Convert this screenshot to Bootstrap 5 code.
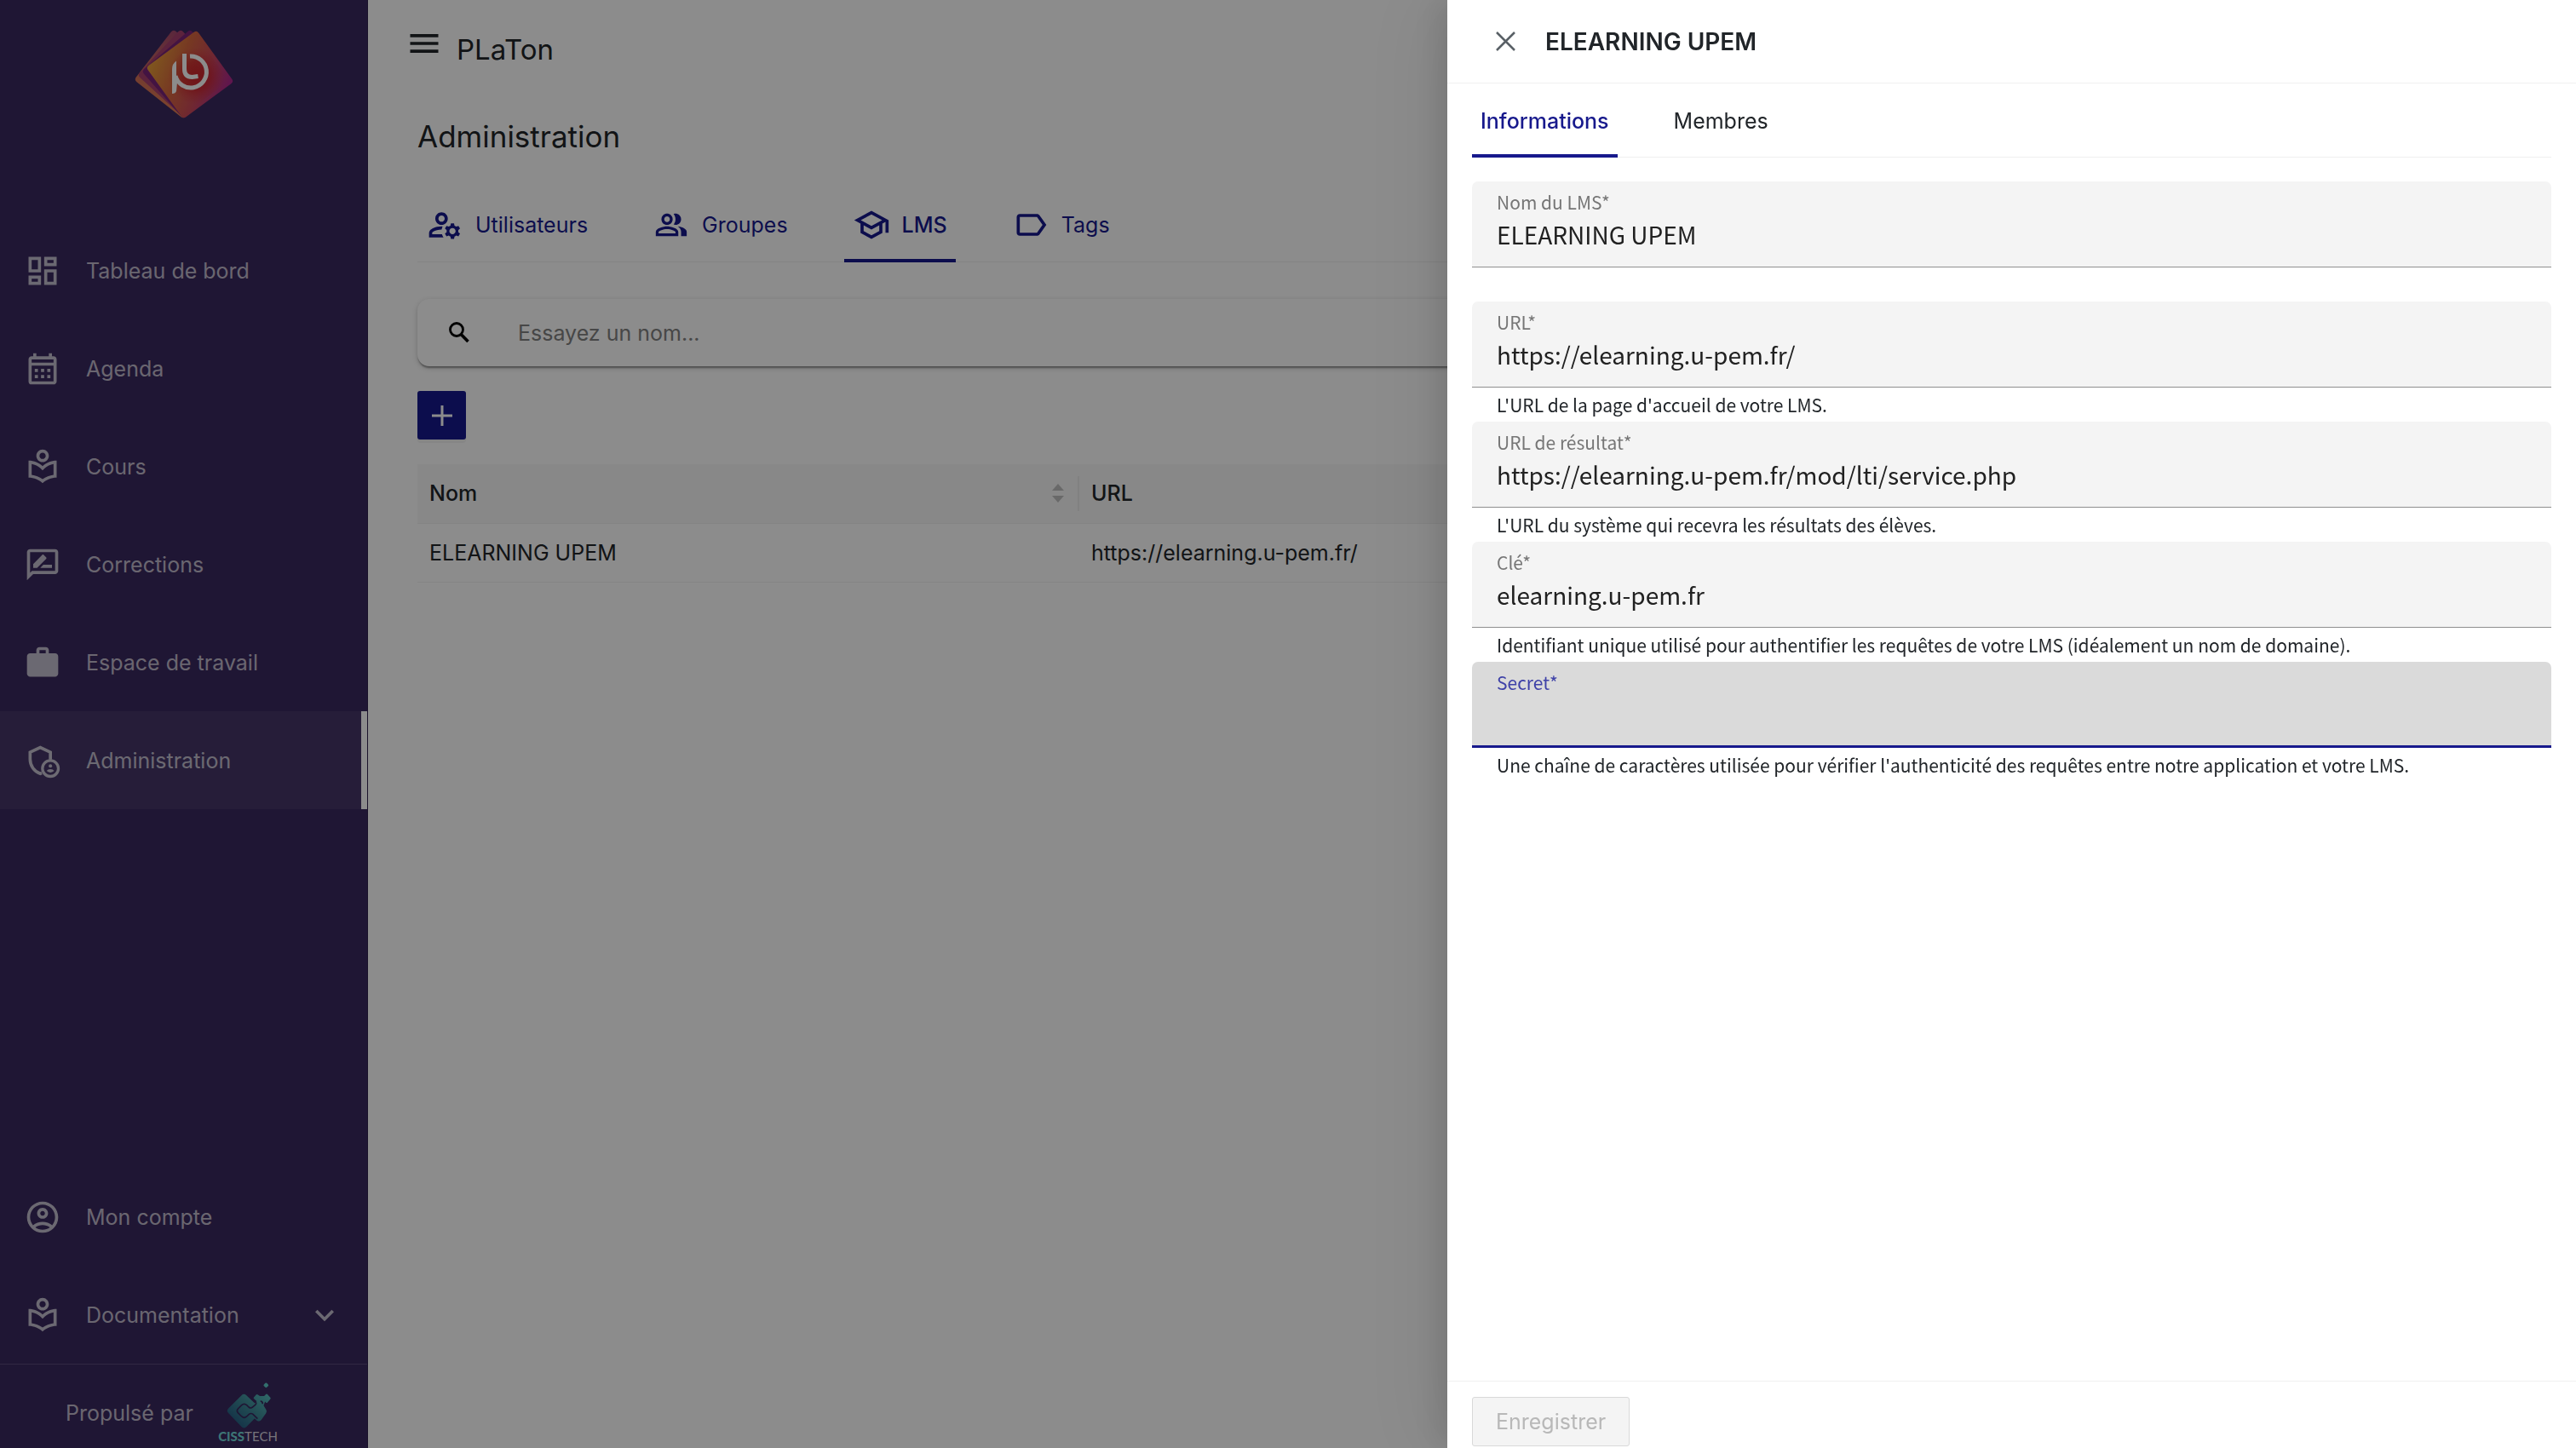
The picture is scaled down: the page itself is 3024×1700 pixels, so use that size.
<!DOCTYPE html>
<html lang="fr">
<head>
<meta charset="utf-8">
<meta name="viewport" content="width=device-width, initial-scale=1">
<title>PLaTon - Administration</title>
<link href="https://cdn.jsdelivr.net/npm/bootstrap@5.3.0/dist/css/bootstrap.min.css" rel="stylesheet">
<style>
:root { --brand: #17198c; --side: #3a285f; --line: #f0f0f0; }
body { font-family: Inter, "Liberation Sans", sans-serif; font-size: 25px; line-height: 40px; color: #212529; background: #fff; }
a { text-decoration: none; }
.ico { width: 44px; height: 44px; flex: none; fill: currentColor; }
.shell { min-height: 100vh; }

/* Sidebar */
.side { width: 432px; flex: none; background: var(--side); border-right: 1px solid #2e1f4d; }
.side-brand { height: 260px; padding-top: 35px; }
.side-brand svg { width: 116px; height: 104px; }
.side-link { display: flex; align-items: center; gap: 29px; height: 115px; padding: 0 21px 0 28px; border-right: 7px solid transparent; }
.side-link, .side-credit { color: rgba(255,255,255,.7); }
.side-link:hover { color: #fff; }
.side-link.on { background: #453668; border-right-color: #fff; }
.side-link .chev { width: 44px; height: 44px; }
.side-credit { height: 99px; border-top: 1px solid #5a4a7b; padding: 16px 0 0 77px; gap: 26px; }
.side-credit svg { width: 76px; height: 80px; }
.logo-txt { font: 15px Lato, sans-serif; fill: #d8d4df; }
.logo-txt .b { font-weight: 900; fill: #6fd6d6; }

/* Page */
.page { padding: 0 58px; }
.topbar { height: 102px; margin-left: -14px; gap: 16px; }
.topbar .site { font-size: 33px; line-height: 40px; padding-top: 14px; }
.page h1 { font-size: 35px; line-height: 48px; margin: 34px 0 0; font-weight: 400; }
.line-tabs { gap: 56px; border-bottom: 1px solid var(--line); list-style: none; margin: 0; padding: 0; }
.line-tabs a { display: flex; align-items: center; gap: 14px; padding: 4px 10px 0; height: 89px; border-bottom: 4px solid transparent; margin-bottom: -1px; color: var(--brand); }
.line-tabs a.on { border-bottom-color: var(--brand); font-weight: 500; }
.main-tabs { margin-top: 35px; }
.search { height: 79px; border-radius: 14px; margin: 43px 0 29px; padding: 0 36px; gap: 56px; box-shadow: 0 3px 2px -1px rgba(0,0,0,.35), 0 2px 6px rgba(0,0,0,.2); background: #fff; }
.search svg { width: 26px; height: 26px; flex: none; }
.search input { border: 0; padding: 0; flex: 1; background: none; outline: 0; }
.search input::placeholder { color: #818181; }
.add-btn { width: 57px; height: 57px; padding: 0; border: 0; border-radius: 3px; background: var(--brand); display: flex; align-items: center; justify-content: center; box-shadow: 0 4px 0 rgba(0,0,0,.04); }
.add-btn svg { width: 24px; height: 24px; }
.lms { margin: 29px 0 0; table-layout: fixed; }
.lms > :not(caption) > * > * { padding: 14px; height: 69px; border-bottom: 1px solid var(--line); vertical-align: middle; }
.lms thead th { background: #f8f8f8; font-weight: 500; }
.col-name { width: 777px; }
.th-in { display: flex; align-items: center; }
.th-in svg { width: 18px; height: 24px; }
.lms thead th.has-split { padding-right: 0; }
.split { width: 2px; height: 41px; background: #ebebeb; margin-left: 14px; }

/* Drawer */
.offcanvas-backdrop.show { opacity: .45; }
.drawer { --bs-offcanvas-width: 1325px; --bs-offcanvas-border-width: 0; color: #212529; outline: 0; box-shadow: -12px 0 32px rgba(0,0,0,.1), -18px 0 90px 8px rgba(0,0,0,.07); }
.drawer-head { height: 98px; padding: 0 57px; gap: 35px; border-bottom: 1px solid var(--line); }
.drawer-head button { width: 23px; height: 23px; padding: 0; border: 0; background: none; display: flex; color: #596066; }
.drawer-head h2 { font-size: 28px; line-height: 40px; margin: 0; font-weight: 600; }
.drawer-body { padding: 0 29px; flex: 1; }
.drawer-tabs a { height: 87px; color: #212529; }
.drawer-tabs a.on { color: var(--brand); }
.fields { padding-top: 28px; font-family: "Noto Sans CJK JP", "Noto Sans", sans-serif; }
.mfield { height: 141px; }
.mbox { height: 101px; background: #f4f4f4; border-bottom: 1px solid #8f8f8f; border-radius: 7px 7px 0 0; padding: 8px 29px 0; }
.mbox label { display: block; font-size: 21px; line-height: 32px; color: #767676; }
.mbox input { display: block; width: 100%; border: 0; padding: 0; background: none; outline: 0; font-size: 28px; line-height: 44px; height: 44px; color: #212121; }
.mbox.on { background: #dadada; border-bottom: 3px solid var(--brand); }
.mbox.on label { color: #3f42a8; }
.mhint { font-size: 21px; line-height: 32px; padding: 4px 29px 0; margin: 0; color: #212529; }
.drawer-foot { border-top: 1px solid var(--line); padding: 18px 29px 2px; }
.save { height: 58px; padding: 0 27px; border: 1px solid #d9d9d9; border-radius: 3px; background: #f4f4f4; color: #b8b8b8; }
</style>
</head>
<body>
<div class="shell d-flex">
  <nav class="side d-flex flex-column" aria-label="Navigation">
    <div class="side-brand text-center">
      <svg viewBox="0 0 116 104" aria-hidden="true">
        <defs>
          <linearGradient id="g1" x1="0" y1=".3" x2="1" y2=".7"><stop offset="0" stop-color="#e8a038"/><stop offset=".35" stop-color="#d8683f"/><stop offset=".65" stop-color="#cc4a58"/><stop offset="1" stop-color="#ac2690"/></linearGradient>
          <radialGradient id="g2" cx=".58" cy=".52" r=".36"><stop offset="0" stop-color="#cc1c24" stop-opacity=".85"/><stop offset=".5" stop-color="#cc1c24" stop-opacity=".6"/><stop offset="1" stop-color="#cc3040" stop-opacity="0"/></radialGradient>
          <linearGradient id="g3" x1=".2" y1="1" x2=".7" y2="0"><stop offset="0" stop-color="#e8824e"/><stop offset="1" stop-color="#a04470"/></linearGradient>
        </defs>
        <g stroke-linejoin="round" stroke-width="8">
          <path d="M5 58 46 5l52 46-41 48z" fill="url(#g3)" stroke="url(#g3)"/>
          <path d="M9 53 54 5l45 50-41 43z" fill="#a8406f" stroke="#a8406f"/>
          <path d="M14 49 65 5l40 52-47 42z" fill="#7a2479" stroke="#7a2479"/>
          <path d="M19 45 72 6l39 54-53 39z" fill="url(#g1)" stroke="url(#g1)"/>
          <path d="M19 45 72 6l39 54-53 39z" fill="url(#g2)"/>
        </g>
        <g fill="none" stroke="#fff" stroke-width="5">
          <path d="M65 31A18.500 18.500 0 1 1 48 54M58.500 28v18q0 9.500 9 9.500l7-1"/>
        </g>
        <path d="M44 75V46q0-6 5-9.500V58l1 4-1 10q-1 3-5 3z" fill="#fff"/>
      </svg>
    </div>
    <a class="side-link" href="#"><svg class="ico" viewBox="0 0 24 24"><path d="M19 5v2h-4V5h4M9 5v6H5V5h4m10 8v6h-4v-6h4M9 17v2H5v-2h4M21 3h-8v6h8V3zM11 3H3v10h8V3zm10 8h-8v10h8V11zm-10 4H3v6h8v-6z"/></svg>Tableau de bord</a>
    <a class="side-link" href="#"><svg class="ico" viewBox="0 0 24 24"><path d="M19 4h-1V2h-2v2H8V2H6v2H5c-1.110 0-2 .9-2 2v14a2 2 0 0 0 2 2h14c1.100 0 2-.9 2-2V6c0-1.100-.9-2-2-2zm0 16H5V10h14v10zm0-12H5V6h14v2zM9 14H7v-2h2v2zm4 0h-2v-2h2v2zm4 0h-2v-2h2v2zm-8 4H7v-2h2v2zm4 0h-2v-2h2v2zm4 0h-2v-2h2v2z"/></svg>Agenda</a>
    <a class="side-link" href="#"><svg class="ico" viewBox="0 0 24 24"><path id="reader" d="M12 9c2.200 0 4-1.800 4-4s-1.800-4-4-4-4 1.800-4 4 1.800 4 4 4zm0-6c1.100 0 2 .9 2 2s-.9 2-2 2-2-.9-2-2 .9-2 2-2zm0 8.550C9.640 9.350 6.480 8 3 8v11c3.480 0 6.640 1.350 9 3.550 2.360-2.190 5.520-3.550 9-3.550V8c-3.480 0-6.640 1.350-9 3.550zm7 5.580c-2.530.34-4.930 1.300-7 2.820-2.060-1.520-4.470-2.490-7-2.830v-6.950c2.100.38 4.050 1.350 5.640 2.830L12 14.280l1.360-1.270c1.590-1.480 3.540-2.450 5.640-2.830v6.950z"/></svg>Cours</a>
    <a class="side-link" href="#"><svg class="ico" viewBox="0 0 24 24"><path d="M20 2H4c-1.100 0-2 .9-2 2v18l4-4h14c1.100 0 2-.9 2-2V4c0-1.100-.9-2-2-2zm0 14H5.170L4 17.170V4h16v12zM10.500 14H18v-2h-5.500zM14.360 8.130c.2-.2.2-.51 0-.71l-1.770-1.770c-.2-.2-.51-.2-.71 0L6 11.530V14h2.470l5.890-5.870z"/></svg>Corrections</a>
    <a class="side-link" href="#"><svg class="ico" viewBox="0 0 24 24"><path d="M20 6h-4V4c0-1.110-.89-2-2-2h-4c-1.110 0-2 .89-2 2v2H4c-1.110 0-2 .89-2 2v11c0 1.110.89 2 2 2h16c1.110 0 2-.89 2-2V8c0-1.110-.89-2-2-2zm-6 0h-4V4h4v2z"/></svg>Espace de travail</a>
    <a class="side-link on" href="#" aria-current="page"><svg class="ico" viewBox="0 0 24 24"><path d="M17 11.200V6.650L10.500 3.600 4 6.650V11c0 4.200 2.600 8 6.500 9.300l1-.4" fill="none" stroke="currentColor" stroke-width="2"/><circle cx="17" cy="17" r="5.100" fill="none" stroke="currentColor" stroke-width="1.800"/><circle cx="17" cy="15.400" r="1.100"/><path d="M14.600 18.600q.6-1.100 2.400-1.100t2.400 1.100q-.9 1-2.400 1t-2.400-1z"/></svg>Administration</a>
    <div class="mt-auto">
      <a class="side-link" href="#"><svg class="ico" viewBox="0 0 24 24"><path d="M12 2C6.480 2 2 6.480 2 12s4.480 10 10 10 10-4.480 10-10S17.520 2 12 2zM7.350 18.500C8.660 17.560 10.260 17 12 17s3.340.56 4.650 1.500C15.340 19.440 13.740 20 12 20s-3.340-.56-4.650-1.500zm10.790-1.380C16.450 15.800 14.320 15 12 15s-4.450.8-6.140 2.120C4.700 15.730 4 13.950 4 12c0-4.420 3.580-8 8-8s8 3.580 8 8c0 1.950-.7 3.730-1.860 5.120zM12 6c-1.930 0-3.500 1.570-3.500 3.500S10.070 13 12 13s3.500-1.570 3.500-3.500S13.930 6 12 6zm0 5c-.83 0-1.500-.67-1.500-1.500S11.170 8 12 8s1.500.67 1.500 1.500S12.830 11 12 11z"/></svg>Mon compte</a>
      <a class="side-link" href="#"><svg class="ico" viewBox="0 0 24 24"><use href="#reader"/></svg><span class="flex-grow-1">Documentation</span><svg class="chev" viewBox="0 0 24 24" fill="currentColor"><path d="M7.410 8.590 12 13.170l4.590-4.580L18 10l-6 6-6-6 1.410-1.410z"/></svg></a>
      <div class="side-credit d-flex align-items-center">
        <span>Propulsé par</span>
        <svg viewBox="-4 0 76 80" role="img" aria-label="CISSTECH">
          <defs><linearGradient id="c1" gradientUnits="userSpaceOnUse" x1="60" y1="172" x2="190" y2="30"><stop offset="0" stop-color="#1f5480"/><stop offset=".5" stop-color="#3f8c98"/><stop offset="1" stop-color="#5ccbc8"/></linearGradient></defs>
          <g transform="translate(-4 0) scale(.3333)">
            <g fill="url(#c1)" stroke="url(#c1)" stroke-linejoin="round">
              <path d="M100 66 54 112l46 48 34-34v-28z" stroke-width="24"/>
              <path d="M152 88 128 112l24 24 16-22z" stroke-width="24"/>
              <path d="M146 58 138 67l28 24 6-16z" stroke-width="8"/>
              <path d="M180 57 169 68l11 12 10-12z" stroke-width="8"/>
              <path d="M178 17l-5 5 5 5 5-5z" stroke-width="7"/>
              <path d="M148 66h30" stroke-width="12"/>
            </g>
            <path d="M122 62 140 80q6 6 0 11l-9 8q-7 6-14 0l-7-7q-9-8-18 0L79 105q-6 7 0 14l13 13q9 8 18 0l8-8q7-5 14 0l16 16" fill="none" stroke="#3a285f" stroke-width="5"/>
            <path d="M158 78q8 0 8 10" fill="none" stroke="#3a285f" stroke-width="5"/>
          </g>
          <text class="logo-txt" x="34" y="73" text-anchor="middle"><tspan class="b">CISS</tspan>TECH</text>
        </svg>
      </div>
    </div>
  </nav>

  <main class="page flex-grow-1">
    <header class="topbar d-flex align-items-center">
      <a href="#" class="text-reset d-flex" aria-label="Menu"><svg class="ico" viewBox="0 0 24 24"><path d="M3 18h18v-2H3v2zm0-5h18v-2H3v2zm0-7v2h18V6H3z"/></svg></a>
      <span class="site">PLaTon</span>
    </header>
    <h1>Administration</h1>
    <ul class="line-tabs main-tabs d-flex">
      <li><a href="#"><svg class="ico" viewBox="0 0 24 24"><path d="M4 18v-.65c0-.34.16-.66.41-.81C6.100 15.530 8.030 15 10 15c.03 0 .05 0 .08.010.1-.7.3-1.370.59-1.980-.22-.02-.44-.03-.67-.03-2.420 0-4.680.67-6.610 1.820-.88.52-1.390 1.500-1.390 2.530V20h9.260c-.42-.6-.75-1.280-.97-2H4zM10 12c2.210 0 4-1.790 4-4s-1.790-4-4-4-4 1.790-4 4 1.790 4 4 4zm0-6c1.100 0 2 .9 2 2s-.9 2-2 2-2-.9-2-2 .9-2 2-2zM20.750 16c0-.22-.03-.42-.06-.63l1.140-1.010-1-1.730-1.450.49c-.32-.27-.68-.48-1.080-.63L18 11h-2l-.3 1.490c-.4.15-.76.36-1.080.63l-1.450-.49-1 1.730 1.140 1.010c-.03.210-.06.410-.06.630s.03.420.06.630l-1.140 1.010 1 1.730 1.450-.49c.32.27.68.48 1.080.63L16 21h2l.3-1.490c.4-.15.76-.36 1.080-.63l1.450.49 1-1.730-1.140-1.010c.03-.21.06-.41.06-.63zM17 18c-1.100 0-2-.9-2-2s.9-2 2-2 2 .9 2 2-.9 2-2 2z"/></svg>Utilisateurs</a></li>
      <li><a href="#"><svg class="ico" viewBox="0 0 24 24"><g transform="translate(1.200 1.200) scale(.9)"><path d="M16.670 13.130C18.040 14.060 19 15.320 19 17v3h4v-3c0-2.180-3.570-3.470-6.330-3.870zM15 12c2.210 0 4-1.790 4-4s-1.790-4-4-4c-.47 0-.91.1-1.330.24C14.500 5.270 15 6.580 15 8s-.5 2.730-1.330 3.760c.42.14.86.24 1.330.24zM9 12c2.210 0 4-1.790 4-4s-1.790-4-4-4-4 1.790-4 4 1.790 4 4 4zm0-6c1.100 0 2 .9 2 2s-.9 2-2 2-2-.9-2-2 .9-2 2-2zM9 13c-2.670 0-8 1.340-8 4v3h16v-3c0-2.660-5.330-4-8-4zm6 5H3v-.99C3.200 16.290 6.300 15 9 15s5.800 1.290 6 2v1z"/></g></svg>Groupes</a></li>
      <li><a class="on" href="#" aria-current="page"><svg class="ico" viewBox="0 0 24 24"><path d="M12 3L1 9l4 2.180v6L12 21l7-3.820v-6l2-1.090V17h2V9L12 3zm6.820 6L12 12.720 5.180 9 12 5.280 18.820 9zM17 15.990l-5 2.730-5-2.730v-3.720L12 15l5-2.730v3.720z"/></svg>LMS</a></li>
      <li><a href="#"><svg class="ico" viewBox="0 0 24 24"><path d="M17.630 5.840C17.270 5.330 16.670 5 16 5L5 5.010C3.900 5.010 3 5.900 3 7v10c0 1.100.9 1.990 2 1.990L16 19c.67 0 1.270-.33 1.630-.84L22 12l-4.370-6.160zM16 17H5V7h11l3.550 5L16 17z"/></svg>Tags</a></li>
    </ul>
    <div class="search d-flex align-items-center">
      <svg viewBox="0 0 26 26" fill="none" stroke="#000" stroke-width="2.800"><circle cx="10" cy="9" r="7.500"/><path d="M15.200 14.500l8.300 8.500" stroke-width="3.600"/></svg>
      <input type="text" placeholder="Essayez un nom..." aria-label="Rechercher un LMS">
    </div>
    <button class="add-btn" type="button" aria-label="Ajouter"><svg viewBox="0 0 24 24" stroke="#fff" stroke-width="3"><path d="M12 0v24M0 12h24"/></svg></button>
    <table class="table lms">
      <colgroup><col class="col-name"><col></colgroup>
      <thead><tr>
        <th class="has-split py-0"><div class="th-in"><span class="flex-grow-1">Nom</span><svg viewBox="0 0 18 24" fill="#bfbfbf"><path d="M2 9l7-8 7 8zM2 15l7 8 7-8z"/></svg><span class="split"></span></div></th>
        <th>URL</th>
      </tr></thead>
      <tbody><tr><td>ELEARNING UPEM</td><td>https://elearning.u-pem.fr/</td></tr></tbody>
    </table>
  </main>
</div>

<div class="offcanvas-backdrop fade show"></div>
<aside class="offcanvas offcanvas-end show drawer" data-bs-backdrop="false" data-bs-scroll="true" tabindex="-1" aria-labelledby="drawerTitle">
  <div class="drawer-head d-flex align-items-center">
    <button type="button" aria-label="Fermer"><svg viewBox="0 0 23 23" width="23" height="23" stroke="currentColor" stroke-width="2.500"><path d="M1 1l21 21M22 1L1 22"/></svg></button>
    <h2 id="drawerTitle">ELEARNING UPEM</h2>
  </div>
  <div class="drawer-body">
    <ul class="line-tabs drawer-tabs d-flex">
      <li><a class="on" href="#" aria-current="page">Informations</a></li>
      <li><a href="#">Membres</a></li>
    </ul>
    <form class="fields">
      <div class="mfield"><div class="mbox"><label for="f1">Nom du LMS*</label><input id="f1" type="text" value="ELEARNING UPEM"></div></div>
      <div class="mfield"><div class="mbox"><label for="f2">URL*</label><input id="f2" type="text" value="https://elearning.u-pem.fr/"></div><p class="mhint">L'URL de la page d'accueil de votre LMS.</p></div>
      <div class="mfield"><div class="mbox"><label for="f3">URL de résultat*</label><input id="f3" type="text" value="https://elearning.u-pem.fr/mod/lti/service.php"></div><p class="mhint">L'URL du système qui recevra les résultats des élèves.</p></div>
      <div class="mfield"><div class="mbox"><label for="f4">Clé*</label><input id="f4" type="text" value="elearning.u-pem.fr"></div><p class="mhint">Identifiant unique utilisé pour authentifier les requêtes de votre LMS (idéalement un nom de domaine).</p></div>
      <div class="mfield"><div class="mbox on"><label for="f5">Secret*</label><input id="f5" type="text"></div><p class="mhint">Une chaîne de caractères utilisée pour vérifier l'authenticité des requêtes entre notre application et votre LMS.</p></div>
    </form>
  </div>
  <div class="drawer-foot"><button class="save" type="button" disabled>Enregistrer</button></div>
</aside>
<script src="https://cdn.jsdelivr.net/npm/bootstrap@5.3.0/dist/js/bootstrap.bundle.min.js"></script>
</body>
</html>
